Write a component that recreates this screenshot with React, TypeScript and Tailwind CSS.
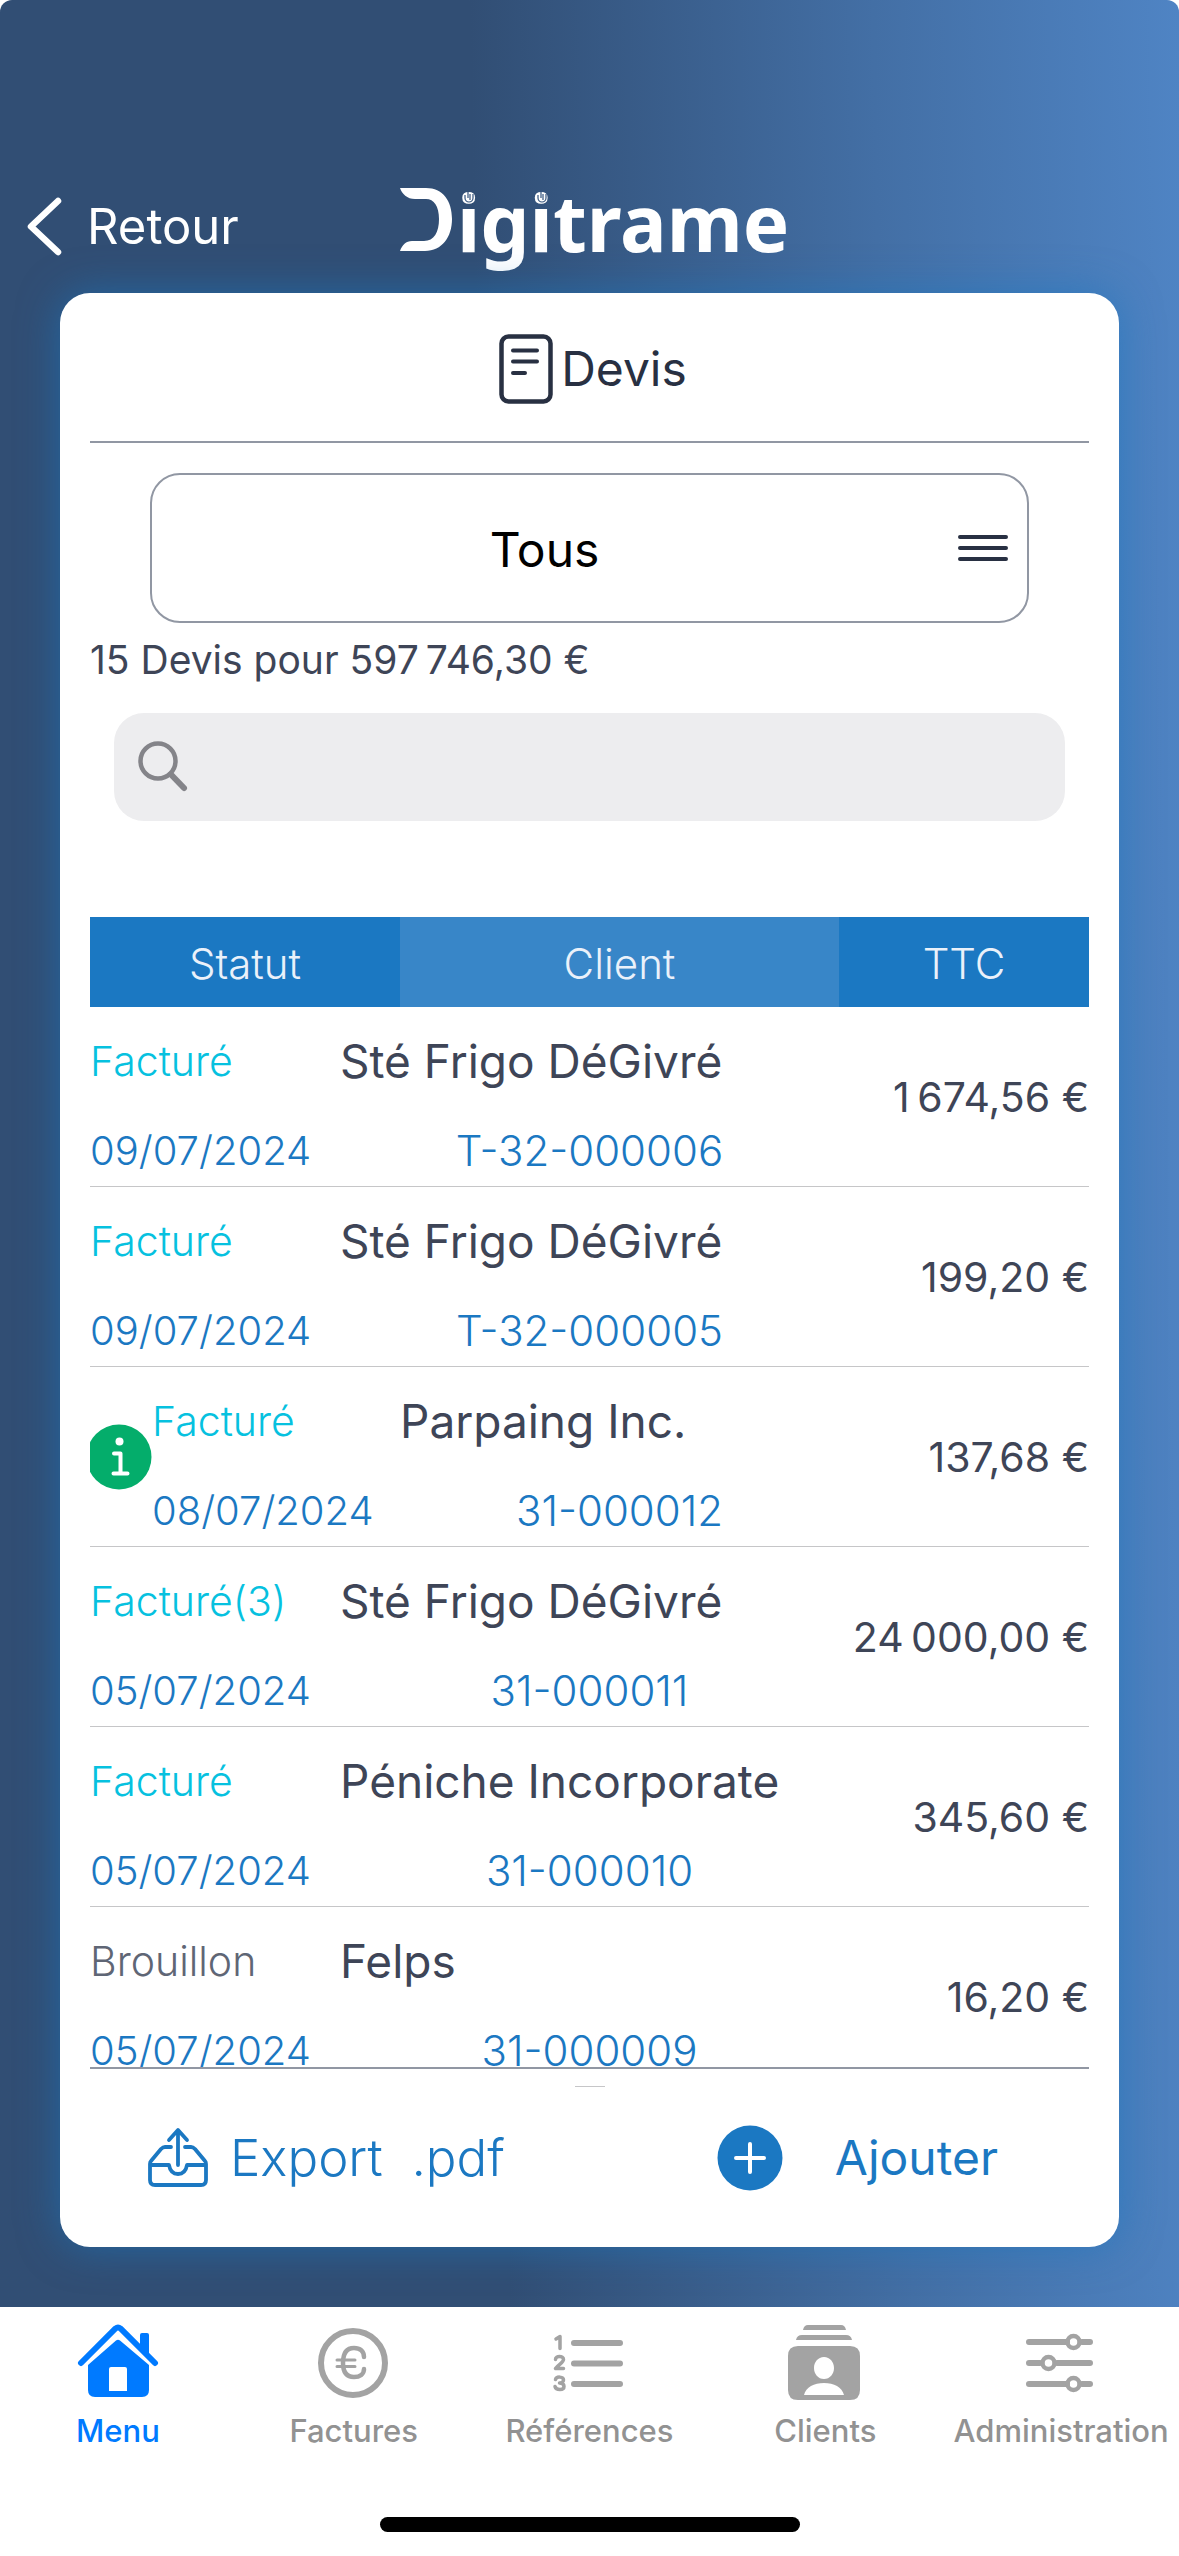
import React from "react";

type Quote = {
  status: string;
  draft?: boolean;
  info?: boolean;
  date: string;
  client: string;
  reference: string;
  total: string;
};

const quotes: Quote[] = [
  { status: "Facturé", date: "09/07/2024", client: "Sté Frigo DéGivré", reference: "T-32-000006", total: "1\u202f674,56 €" },
  { status: "Facturé", date: "09/07/2024", client: "Sté Frigo DéGivré", reference: "T-32-000005", total: "199,20 €" },
  { status: "Facturé", info: true, date: "08/07/2024", client: "Parpaing Inc.", reference: "31-000012", total: "137,68 €" },
  { status: "Facturé(3)", date: "05/07/2024", client: "Sté Frigo DéGivré", reference: "31-000011", total: "24\u202f000,00 €" },
  { status: "Facturé", date: "05/07/2024", client: "Péniche Incorporate", reference: "31-000010", total: "345,60 €" },
  { status: "Brouillon", draft: true, date: "05/07/2024", client: "Felps", reference: "31-000009", total: "16,20 €" },
];

function Fingerprint({ cx }: { cx: number }) {
  return (
    <g fill="none" stroke="#34547d" strokeWidth="1.2">
      <path d={`M${cx - 4} 9v3a4 4 0 0 0 8 0v-4`} />
      <path d={`M${cx - 1} 6v6M${cx + 1} 14v-6`} />
    </g>
  );
}

function Logo() {
  return (
    <svg className="h-[92px] w-[404px]" viewBox="-12 0 404 92" role="img" aria-label="Digitrame">
      <path
        d="M0 2h26c17 0 26 13 26 31s-10 32-27 32H0c2-6 6-10 12-10h12c10 0 15-9 15-22s-5-20-13-20H15C7 13 2 8 0 2Z"
        fill="#fff"
      />
      <text x="57" y="66" fill="#fff" fontFamily="'Noto Sans', sans-serif" fontWeight="700" fontSize="78">
        igitrame
      </text>
      <Fingerprint cx={69} />
      <Fingerprint cx={142} />
    </svg>
  );
}

function HomeIcon() {
  return (
    <svg className="h-[76px] w-[84px]" viewBox="0 0 84 76" fill="none" aria-hidden="true">
      <path d="M5 40 39.500 5.500q2.500-2 5 0L79 40" stroke="currentColor" strokeWidth="6" strokeLinecap="round" />
      <path d="M64 27V12q0-2 2-2h5q2 0 2 2v24Z" fill="currentColor" />
      <path
        fillRule="evenodd"
        d="M12 42 40 17.500q2-1.500 4 0L73 42v25q0 7-7 7H19q-7 0-7-7Zm23 2q-2 0-2 2v22h18V46q0-2-2-2Z"
        fill="currentColor"
      />
    </svg>
  );
}

function EuroIcon() {
  return (
    <svg className="h-[76px] w-[76px]" viewBox="0 0 76 76" fill="none" stroke="currentColor" strokeLinecap="round" aria-hidden="true">
      <circle cx="37" cy="40" r="32" strokeWidth="6" />
      <path d="M48 34c0-6-4-9-10-9-8 0-11 6-11 15s3 14 11 14c6 0 10-3 10-8" strokeWidth="4.500" />
      <path d="M21 37h18M21 43.500h18" strokeWidth="3" />
    </svg>
  );
}

function NumberedListIcon() {
  return (
    <svg className="h-[76px] w-[76px]" viewBox="0 0 76 76" aria-hidden="true">
      <g stroke="currentColor" strokeWidth="6" strokeLinecap="round">
        <path d="M23 20h46M23 40.500h46M23 61h46" />
      </g>
      <g fill="none" stroke="currentColor" strokeWidth="3.500" strokeLinecap="round" strokeLinejoin="round">
        <path d="M5 16l4-2.500v12" />
        <path d="M4.500 36.500c0-4 8-4 8 0 0 3-5 5-8 9h8" />
        <path d="M4.500 56.500c1-3.500 8-3 8 .5 0 2-2 3-4 3 3 0 4.500 1.500 4.500 3.500 0 4-8 4-9 0" />
      </g>
    </svg>
  );
}

function ContactsIcon() {
  return (
    <svg className="h-[78px] w-[76px]" viewBox="1 0 76 78" fill="currentColor" aria-hidden="true">
      <path d="M17 7q1-5 5-5h33q4 0 5 5ZM10 17q1-5 6-5h44q5 0 6 5Z" />
      <path
        fillRule="evenodd"
        d="M12 23h52q10 0 10 10v34q0 10-10 10H12Q2 77 2 67V33q0-10 10-10Zm26 11c-6 0-10 5-10 11s4 11 10 11 10-5 10-11-4-11-10-11ZM18 72h40c-2-8-10-12-20-12s-18 4-20 12Z"
      />
    </svg>
  );
}

function SlidersIcon() {
  return (
    <svg className="h-[76px] w-[76px]" viewBox="0 0 76 76" fill="none" stroke="currentColor" strokeWidth="6" strokeLinecap="round" aria-hidden="true">
      <path d="M6 19h38M59 19h8M6 40h11M34 40h33M6 61h38M59 61h8" />
      <g strokeWidth="4.500">
        <circle cx="50.500" cy="19" r="6" />
        <circle cx="25.500" cy="40" r="6" />
        <circle cx="50.500" cy="61" r="6" />
      </g>
    </svg>
  );
}

const tabs = [
  { label: "Menu", icon: <HomeIcon />, active: true },
  { label: "Factures", icon: <EuroIcon /> },
  { label: "Références", icon: <NumberedListIcon /> },
  { label: "Clients", icon: <ContactsIcon /> },
  { label: "Administration", icon: <SlidersIcon /> },
];

function QuoteRow({ quote }: { quote: Quote }) {
  const statusColor = quote.draft ? "text-[41px] text-[#5f6675]" : "text-[41px] text-[#06c1df]";
  return (
    <tr>
      <td colSpan={quote.info ? 2 : 1} className="border-b border-[#c6c6c8] p-0">
        <div className="flex items-center">
          {quote.info && (
            <span className="flex h-[66px] w-[62px] shrink-0 justify-end overflow-hidden">
              <svg className="h-[66px] w-[66px] shrink-0" viewBox="0 0 66 66" role="img" aria-label="Information">
                <circle cx="33" cy="33" r="32.500" fill="#04ad6b" />
                <circle cx="33.500" cy="17.500" r="4" fill="#fff" />
                <path d="M28 29.500h6.500V49.500M27.500 49.500h14" fill="none" stroke="#fff" strokeWidth="4" strokeLinecap="round" strokeLinejoin="round" />
              </svg>
            </span>
          )}
          <div className="flex flex-col gap-[20px] pt-[19px] leading-[70px] font-light">
            <span className={statusColor}>{quote.status}</span>
            <span className="text-[40px] text-[#1b78c2]">{quote.date}</span>
          </div>
        </div>
      </td>
      <td colSpan={quote.info ? 1 : 2} className="border-b border-[#c6c6c8] p-0">
        <div className="flex flex-col gap-[20px] pt-[19px] leading-[70px]">
          <span className="text-[46px] text-[#3e4557]">{quote.client}</span>
          <a href="#" className="text-center text-[42px] font-light text-[#1b78c2]">
            {quote.reference}
          </a>
        </div>
      </td>
      <td className="border-b border-[#c6c6c8] p-0 pt-[2px] text-right text-[41px] text-[#3e4557]">{quote.total}</td>
    </tr>
  );
}

export default function App() {
  return (
    <div className="h-screen bg-white font-['Inter',sans-serif]">
      <div className="flex h-full flex-col overflow-hidden rounded-t-xl bg-[linear-gradient(89deg,#314e74_0%,#314e74_42%,#436fa5_75%,#4f84c4_100%)]">
        <header className="grid shrink-0 grid-cols-[1fr_auto_1fr] items-center px-6 pt-[186px] pb-[15px]">
          <button type="button" className="flex h-[82px] items-center gap-[25px] self-start text-[49px] leading-[60px] text-white">
            <svg className="h-[64px] w-[38px]" viewBox="0 0 38 64" fill="none" aria-hidden="true">
              <path d="M34 6 7 31.500 34 57" stroke="#fff" strokeWidth="6.500" strokeLinecap="round" strokeLinejoin="round" />
            </svg>
            Retour
          </button>
          <Logo />
        </header>

        <main className="mx-[60px] mb-[60px] flex min-h-0 flex-1 flex-col rounded-[30px] bg-white px-[30px] shadow-[0_0_40px_rgba(27,120,194,0.6)]">
          <h1 className="flex h-[150px] shrink-0 items-center justify-center gap-[7px] border-b-2 border-[#9197a3] pt-[4px] pl-[6px] text-[48px] text-[#283042]">
            <svg className="h-[72px] w-[56px]" viewBox="0 0 56 72" fill="none" stroke="currentColor" strokeWidth="4.500" strokeLinecap="round" aria-hidden="true">
              <rect x="3.500" y="3.500" width="49" height="65" rx="7" />
              <path d="M15 17.500h24M15 28.500h24M15 40h12" strokeWidth="4" />
            </svg>
            Devis
          </h1>

          <div className="mx-[60px] mt-[30px] flex h-[150px] shrink-0 items-center gap-[20px] rounded-[30px] border-2 border-[#9197a3] pr-[18px]">
            <select
              aria-label="Filtrer par statut"
              className="h-full min-w-0 flex-1 appearance-none bg-transparent pt-[3px] text-center text-[48px] text-black [text-align-last:center]"
            >
              <option>Tous</option>
            </select>
            <svg className="h-[28px] w-[52px]" viewBox="0 0 52 28" stroke="#283042" strokeWidth="4" strokeLinecap="round" aria-hidden="true">
              <path d="M3 3h46M3 14h46M3 25h46" />
            </svg>
          </div>

          <p className="mt-[11px] text-[39px] leading-[52px] text-[#3e4557]">{"15 Devis pour 597\u202f746,30 €"}</p>

          <label className="mx-[24px] mt-[27px] flex h-[108px] shrink-0 items-center gap-4 rounded-[30px] bg-[#ededef] px-[22px]">
            <svg className="h-[54px] w-[54px]" viewBox="0 0 54 54" fill="none" stroke="#848489" strokeLinecap="round" aria-hidden="true">
              <circle cx="22" cy="21" r="17.500" strokeWidth="4.500" />
              <path d="M35 34.500 48 48" strokeWidth="6" />
            </svg>
            <input type="search" aria-label="Rechercher" className="h-full min-w-0 flex-1 bg-transparent text-[41px] outline-none" />
          </label>

          <div className="mt-[96px] min-h-0 flex-1 overflow-hidden border-b-2 border-[#9197a3]">
            <table className="w-full table-fixed border-separate border-spacing-0">
              <colgroup>
                <col className="w-[250px]" />
                <col className="w-[60px]" />
                <col />
                <col className="w-[250px]" />
              </colgroup>
              <thead>
                <tr className="h-[90px] text-[42px] text-[#eaf1fa]">
                  <th colSpan={2} className="bg-[#1b78c2] p-0 pt-[2px] font-light">Statut</th>
                  <th className="bg-[#3886c8] p-0 pt-[2px] font-light">Client</th>
                  <th className="bg-[#1b78c2] p-0 pt-[2px] font-light">TTC</th>
                </tr>
              </thead>
              <tbody>
                {quotes.map((quote) => (
                  <QuoteRow key={quote.reference} quote={quote} />
                ))}
              </tbody>
            </table>
          </div>

          <div className="mx-auto mt-[17px] h-px w-[30px] shrink-0 bg-[#c6c6c8]" />

          <footer className="flex h-[160px] shrink-0 items-center justify-between pr-[91px] pb-[18px] pl-[57px] text-[#1b78c2]">
            <button type="button" className="flex items-center gap-[20px] text-[51px] font-light whitespace-pre">
              <svg className="h-[62px] w-[63px]" viewBox="0 0 63 62" fill="none" stroke="currentColor" strokeWidth="3.800" strokeLinecap="round" strokeLinejoin="round" aria-hidden="true">
                <path d="M31 38V4M22 13l9-10 9 10" />
                <path d="M24 20h-6q-2 0-4 2L4 34q-1 1-1 3v16q0 5 5 5h46q5 0 5-5V37q0-2-1-3L48 22q-2-2-4-2h-6M3 38h19c1 6 4 9 9 9s8-3 9-9h19" />
              </svg>
              {"Export  .pdf"}
            </button>
            <button type="button" className="flex items-center gap-[52px] text-[48px]">
              <svg className="h-[66px] w-[66px]" viewBox="0 0 66 66" aria-hidden="true">
                <circle cx="33" cy="33" r="32.500" fill="currentColor" />
                <path d="M33 19v28M19 33h28" stroke="#fff" strokeWidth="4" strokeLinecap="round" />
              </svg>
              Ajouter
            </button>
          </footer>
        </main>

        <div className="shrink-0 bg-white pt-[16px] pb-[24px]">
          <nav className="grid grid-cols-5">
            {tabs.map((tab) => (
              <a
                key={tab.label}
                href="#"
                aria-current={tab.active ? "page" : undefined}
                className={
                  tab.active
                    ? "flex flex-col items-center text-[31px] leading-[40px] font-medium text-[#007aff]"
                    : "flex flex-col items-center text-[31px] leading-[40px] font-medium text-[#929292]"
                }
              >
                <span className={tab.active ? "mb-[8px] flex h-[80px] items-start" : "mb-[8px] flex h-[80px] items-start text-[#a3a3a3]"}>{tab.icon}</span>
                {tab.label}
              </a>
            ))}
          </nav>
          <div className="mx-auto mt-[66px] h-[15px] w-[420px] rounded-full bg-black" />
        </div>
      </div>
    </div>
  );
}
